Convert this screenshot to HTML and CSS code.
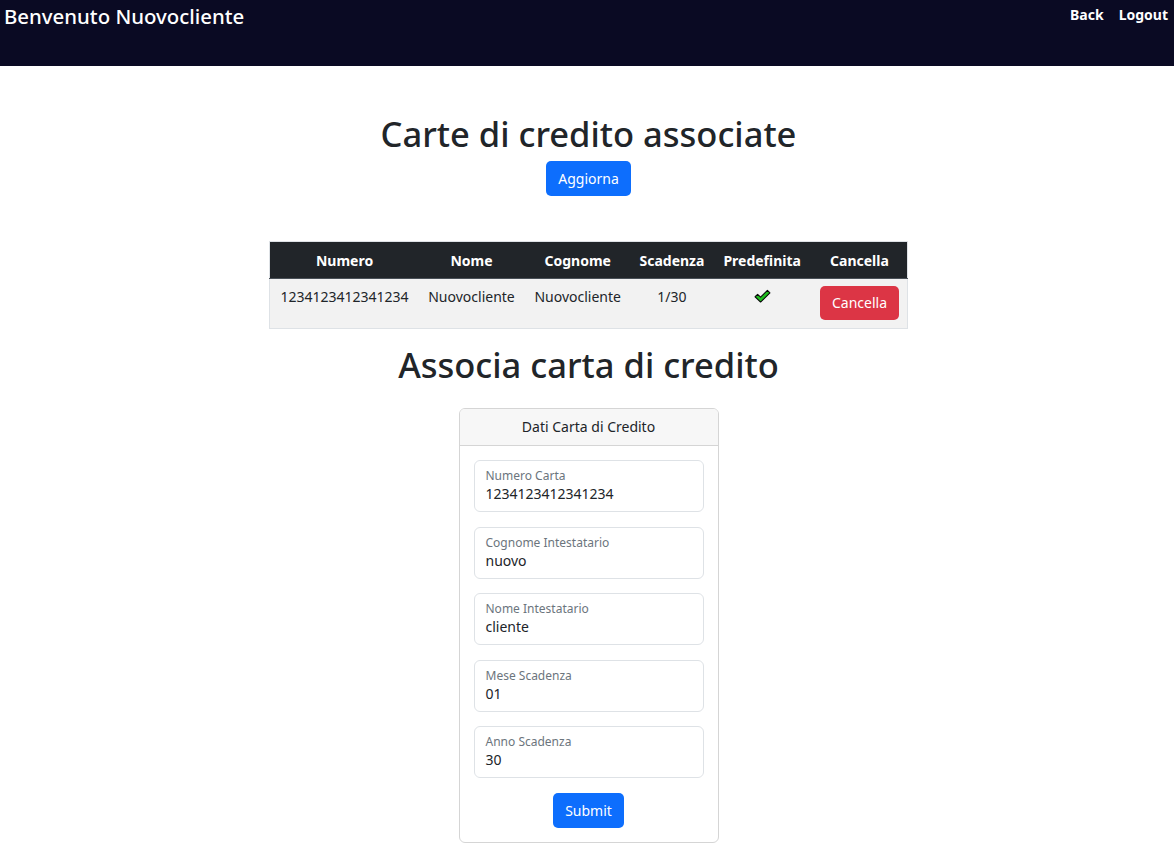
FILE: index.html
```html
<!DOCTYPE html>
<html lang="it">
<head>
<meta charset="utf-8">
<title>Carte di credito</title>
<link rel="stylesheet" href="styles.css">
</head>
<body>
<header class="navbar">
  <div class="brand">Benvenuto Nuovocliente</div>
  <nav class="nav-links">
    <a href="#">Back</a>
    <a href="#">Logout</a>
  </nav>
</header>
<main class="content">
  <h1 class="title title-1">Carte di credito associate</h1>
  <button class="btn btn-primary btn-refresh">Aggiorna</button>
  <table class="cards-table">
    <thead>
      <tr>
        <th class="c-num">Numero</th>
        <th class="c-nome">Nome</th>
        <th class="c-cog">Cognome</th>
        <th class="c-scad">Scadenza</th>
        <th class="c-pred">Predefinita</th>
        <th class="c-canc">Cancella</th>
      </tr>
    </thead>
    <tbody>
      <tr>
        <td>1234123412341234</td>
        <td>Nuovocliente</td>
        <td>Nuovocliente</td>
        <td>1/30</td>
        <td><svg class="check" viewBox="0 0 16 13" width="17" height="14"><path d="M1 7.2 L3.4 4.9 L6.2 7.6 L12.6 1.2 L15 3.6 L6.2 12.2 Z" fill="#1fbf1f" stroke="#0a0a0a" stroke-width="1" stroke-linejoin="round"/></svg></td>
        <td><button class="btn btn-danger">Cancella</button></td>
      </tr>
    </tbody>
  </table>
  <h1 class="title title-2">Associa carta di credito</h1>
  <section class="card">
    <div class="card-header">Dati Carta di Credito</div>
    <form class="card-body">
      <div class="floating"><label>Numero Carta</label><div class="value">1234123412341234</div></div>
      <div class="floating"><label>Cognome Intestatario</label><div class="value">nuovo</div></div>
      <div class="floating"><label>Nome Intestatario</label><div class="value">cliente</div></div>
      <div class="floating"><label>Mese Scadenza</label><div class="value">01</div></div>
      <div class="floating"><label>Anno Scadenza</label><div class="value">30</div></div>
      <button type="button" class="btn btn-primary">Submit</button>
    </form>
  </section>
</main>
</body>
</html>
```
FILE: styles.css
```css
* { box-sizing: border-box; }
body {
  margin: 0;
  font-family: "Noto Sans", "Open Sans", sans-serif;
  color: #212529;
  background: #fff;
  font-size: 14px;
}
.navbar {
  background: #0a0a23;
  height: 66px;
  display: flex;
  justify-content: space-between;
  align-items: flex-start;
  color: #fff;
}
.brand {
  font-size: 20.4px;
  font-weight: 500;
  padding: 2px 0 0 4px;
  line-height: 28px;
}
.nav-links {
  display: flex;
  gap: 15px;
  padding: 5px 6px 0 0;
}
.nav-links a {
  color: #fff;
  text-decoration: none;
  font-weight: 700;
  font-size: 14px;
  line-height: 20px;
}
.content {
  display: flex;
  flex-direction: column;
  align-items: center;
  padding-left: 3px;
}
.title {
  margin: 0;
  font-size: 34.5px;
  font-weight: 500;
  line-height: 44px;
}
.title-1 { margin-top: 46px; }
.title-2 { margin-top: 14px; }
.btn {
  font-family: inherit;
  font-size: 14px;
  border: none;
  border-radius: 5px;
  color: #fff;
  padding: 0 12px;
  height: 35px;
  line-height: 35px;
  cursor: pointer;
}
.btn-primary { background: #0d6efd; }
.btn-danger { background: #dc3545; height: 34px; line-height: 34px; }
.btn-refresh { margin-top: 5px; }
.cards-table {
  margin-top: 45px;
  width: 639px;
  border-collapse: collapse;
  border: 1px solid #dee2e6;
}
.cards-table th {
  background: #212529;
  color: #fff;
  font-weight: 700;
  height: 37px;
  padding: 0 8px;
  border-bottom: 1px solid #495057;
}
.cards-table td {
  background: #f2f2f2;
  text-align: center;
  vertical-align: top;
  padding: 8px 8px 7px;
  height: 50px;
  line-height: 20px;
}
.cards-table td:last-child { padding-top: 7px; }
.check { margin-top: 2px; }
.c-num { width: 150px; }
.c-nome { width: 105px; }
.c-cog { width: 108px; }
.c-scad { width: 80px; }
.c-pred { width: 100px; }
.card {
  margin-top: 21px;
  width: 260px;
  border: 1px solid #d5d5d5;
  border-radius: 6px;
  overflow: hidden;
}
.card-header {
  background: #f7f7f7;
  border-bottom: 1px solid #d5d5d5;
  height: 37px;
  line-height: 36px;
  text-align: center;
  font-size: 14px;
}
.card-body {
  display: flex;
  flex-direction: column;
  align-items: center;
  padding: 14px 14px 14px;
  gap: 14.5px;
  margin: 0;
}
.floating {
  width: 100%;
  height: 52px;
  border: 1px solid #dee2e6;
  border-radius: 6px;
  padding: 7px 11px 0;
}
.floating label {
  display: block;
  font-size: 12px;
  color: #6c757d;
  line-height: 16px;
}
.floating .value {
  font-size: 14px;
  line-height: 20px;
}
```
